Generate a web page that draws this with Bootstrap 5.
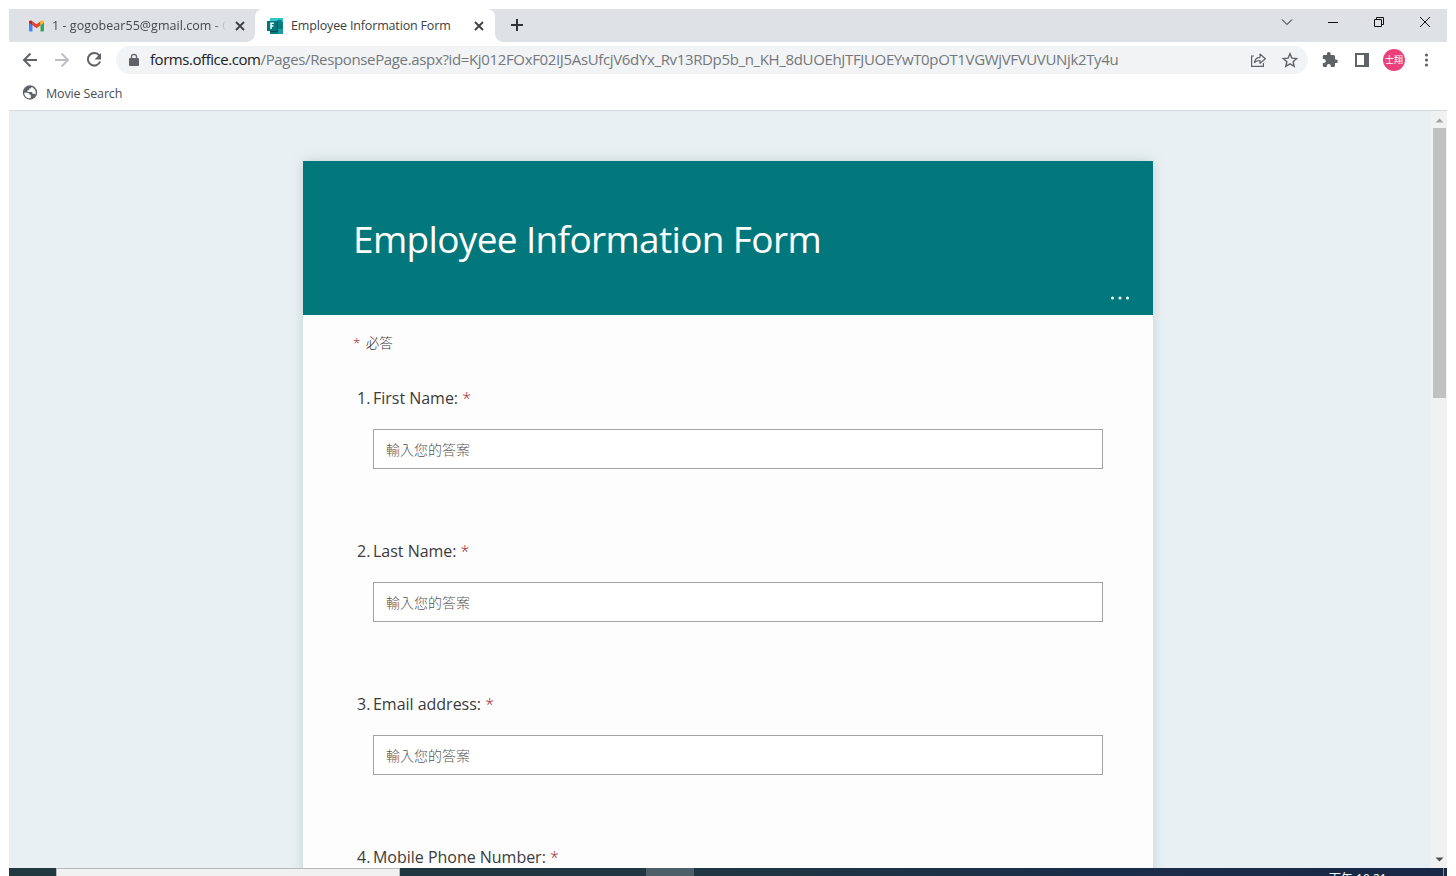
<!DOCTYPE html>
<html lang="zh-Hant">
<head>
<meta charset="utf-8">
<title>Employee Information Form</title>
<link href="https://cdn.jsdelivr.net/npm/bootstrap@5.3.0/dist/css/bootstrap.min.css" rel="stylesheet">
<style>
html,body{height:100%}
body{background:#fff;overflow:hidden;font-family:"Open Sans","Noto Sans CJK TC",sans-serif;color:#333}
svg{display:block;flex:none}
.screen{width:1438px;height:867px;margin:9px 0 0 9px}
.tabstrip{height:33px;background:#dee1e6}
.btab{height:33px;font-size:12.5px;line-height:33px;color:#3c4043;white-space:nowrap}
.tab-mail{width:246px;padding:0 6px 0 20px;color:#45494d}
.tab-form{width:240px;padding:0 11px 0 12px;background:#fff;border-radius:8px 8px 0 0}
.tab-form::before,.tab-form::after{content:"";position:absolute;bottom:0;width:8px;height:8px}
.tab-form::before{left:-8px;background:radial-gradient(circle at 0 0,transparent 7.5px,#fff 8px)}
.tab-form::after{right:-8px;background:radial-gradient(circle at 100% 0,transparent 7.5px,#fff 8px)}
.mail-text{width:174px;overflow:hidden;letter-spacing:.04px;-webkit-mask-image:linear-gradient(90deg,#000 93%,transparent 100%);mask-image:linear-gradient(90deg,#000 93%,transparent 100%)}
.form-title{letter-spacing:-.16px}
.toolbar{height:36px;padding-left:12px}
.omnibox{width:1192px;height:28px;border-radius:14px;background:#f1f3f4;margin-left:13px;padding:0 10px 0 12px}
.url{font-size:15px;line-height:26px;height:28px;letter-spacing:-.35px;color:#74787c;white-space:nowrap;margin-left:10px}
.url span{color:#202124;letter-spacing:-.45px}
.ext{margin-left:14px}
.panel{margin-left:17px}
.avatar{width:22px;height:22px;margin-left:14px;border-radius:50%;background:#ec407a;color:#fff;font-size:9px;line-height:22px}
.bookmarks{height:33px;padding:0 0 3px 13px;border-bottom:1px solid #d5d9dc;font-size:12.5px;letter-spacing:-.15px;color:#4a4e52}
.viewport{height:757px;background:#e8f0f3}
.sheet{width:850px;height:900px;margin:50px 0 0 294px;background:#fdfdfd;box-shadow:0 0 12px rgba(60,90,95,.2)}
.sheet-head{height:154px;background:#03787c;color:#fff;padding:48px 22px 0 50px}
.sheet-head h1{font-size:37px;line-height:60px;font-weight:400;letter-spacing:-.65px;margin:0 0 25px;white-space:nowrap}
.required-note{height:56px;padding:0 50px;font-size:13.5px;line-height:57px;font-weight:300}
.star{color:#a4262c;font-weight:300}
.question{height:153px;padding:12px 50px 0 54px}
.qlabel{font-size:16px;line-height:30px;letter-spacing:-.02px;white-space:nowrap;color:#3b3b3b}
.qnum{width:16px}
.answer{height:40px;margin:16px 0 0 16px;border:1px solid #a3a3a3;background:#fff;padding:0 12px;font-size:14px;font-weight:300;color:#555}
.scroller{width:16px;background:#f1f1f1;padding:7px 1px 6px 2px}
.thumb{width:13px;height:270px;background:#c1c1c1;margin-top:5px}
.taskbar{height:8px;background:linear-gradient(90deg,#213841 0,#203743 50%,#1a2d48 75%,#182846)}
.search-box{width:344px;background:#f1f1f1;border:1px solid #b8b8b8;border-bottom:0;margin-left:47px}
.running{width:48px;background:#4d606a;margin-left:246px}
.clock{margin-left:626px;width:124px;padding:2px 0 0 9px;border-right:1px solid #85909f;color:#fff;font-size:12px;line-height:17px;white-space:nowrap}
</style>
</head>
<body>
<div class="screen d-flex flex-column overflow-hidden">
  <div class="tabstrip d-flex">
    <div class="btab tab-mail d-flex align-items-center">
      <svg width="15" height="12" viewBox="0 0 15 12"><path fill="#4285f4" d="M0 1.500 3.500 4v7.500H1a1 1 0 0 1-1-1z"/><path fill="#34a853" d="M11.500 4 15 1.500v9a1 1 0 0 1-1 1h-2.500z"/><path fill="#ea4335" d="M3.500 1.300 7.500 4.300l4-3v4l-4 3-4-3z"/><path fill="#c5221f" d="M0 2C0 .4 1.800-.2 3.500 1.200v4.100L0 2.700z"/><path fill="#fbbc04" d="M15 2c0-1.600-1.800-2.200-3.500-.8v4.100L15 2.700z"/></svg>
      <div class="mail-text ms-2">1 - gogobear55@gmail.com - G</div>
      <svg class="ms-auto" width="18" height="18" viewBox="0 0 18 18"><path d="m5 5 8 8m0-8-8 8" stroke="#3c4043" stroke-width="1.800"/></svg>
    </div>
    <div class="btab tab-form d-flex align-items-center position-relative">
      <svg width="16" height="16" viewBox="0 0 16 16"><path fill="#1bb1b5" d="M3 0h13v16H3z"/><path fill="#37c6d0" d="M3 0h13v5H3z"/><path fill="#087b80" d="M9 4h7v7H9zM3 11h11v5H3z"/><circle cx="12.500" cy="4" r="2.500" fill="#038387"/><path fill="#1a9ba1" d="M11 11h5v5h-5z"/><path fill="#004f52" d="M3 3h8v11H3z"/><path fill="#03787c" d="M0 3h10v10H0z"/><path fill="none" stroke="#fff" stroke-width="1.500" d="M6.800 5.300H4V11M4 8.100h2.500"/></svg>
      <div class="form-title ms-2">Employee Information Form</div>
      <svg class="ms-auto" width="10" height="10" viewBox="0 0 10 10"><path d="m1 1 8 8m0-8-8 8" stroke="#3c4043" stroke-width="1.800"/></svg>
    </div>
    <svg class="ms-3 mt-2" width="12" height="16" viewBox="0 0 12 16"><path d="M6 2v12M0 8h12" stroke="#303438" stroke-width="2"/></svg>
    <svg class="ms-auto" width="166" height="28" viewBox="0 0 166 28" fill="none" stroke="#111"><path d="m1 10.500 5 5 5-5M47 13.500h10"/><path d="M93.500 10.500h7v7h-7zM95.500 10.500v-2h7v7h-2M139 8l10 10m0-10-10 10"/></svg>
  </div>

  <div class="toolbar d-flex align-items-center">
    <svg width="82" height="20" viewBox="0 0 82 20" fill="none"><path d="M16 10H3m6.500-6.500L3 10l6.500 6.500" stroke="#5f6368" stroke-width="2"/><path d="M34 10h13m-6.500-6.500L47 10l-6.500 6.500" stroke="#bbbdc0" stroke-width="1.800"/><path d="M78.300 5.600A6.300 6.300 0 1 0 79.100 11.500" stroke="#5f6368" stroke-width="2"/><path fill="#5f6368" d="M80 3v6.500h-6.500z"/></svg>
    <div class="omnibox d-flex align-items-center">
      <svg width="12" height="14" viewBox="0 0 12 14"><path fill="#5f6368" d="M2 5h8a1 1 0 0 1 1 1v6a1 1 0 0 1-1 1H2a1 1 0 0 1-1-1V6a1 1 0 0 1 1-1z"/><path d="M3.500 5.500V3.800a2.500 2.500 0 0 1 5 0v1.700" fill="none" stroke="#5f6368" stroke-width="1.300"/></svg>
      <div class="url"><span>forms.office.com</span>/Pages/ResponsePage.aspx?id=Kj012FOxF02IJ5AsUfcjV6dYx_Rv13RDp5b_n_KH_8dUOEhJTFJUOEYwT0pOT1VGWjVFVUVUNjk2Ty4u</div>
      <svg class="ms-auto" width="48" height="18" viewBox="0 0 48 18" fill="none" stroke="#5f6368" stroke-width="1.200"><path d="M4 5H1.600v10.400h11.800V12"/><path d="M4.500 11.500c.5-3.500 2.500-5.200 5.500-5.200V3l5.400 4.800-5.400 4.500V9.500c-2.500 0-4 .5-5.500 2z" stroke-linejoin="round"/><path d="m40 2.700 1.900 4.400 4.800.4-3.600 3.200 1.100 4.700-4.200-2.500-4.200 2.500 1.100-4.700-3.600-3.200 4.800-.4z" stroke-width="1.400"/></svg>
    </div>
    <svg class="ext" width="16" height="16" viewBox="0 0 16 16"><path fill="#5f6368" d="M14 7.400h-1V4.500A1.500 1.500 0 0 0 11.500 3H8.700V2a1.900 1.900 0 0 0-3.800 0v1H2a1.200 1.200 0 0 0-1.200 1.200V7h1a2 2 0 0 1 0 4h-1v2.800A1.300 1.300 0 0 0 2 15h2.800v-1a2 2 0 0 1 4 0v1h2.700a1.500 1.500 0 0 0 1.500-1.500v-2.400h1a1.850 1.850 0 0 0 0-3.700z"/></svg>
    <svg class="panel" width="14" height="14" viewBox="0 0 14 14"><path d="M1 1h12v12H1z" fill="#fff" stroke="#5f6368" stroke-width="2"/><path fill="#5f6368" d="M9 1h4v12H9z"/></svg>
    <div class="avatar text-center">士翔</div>
    <svg class="ms-auto me-3" width="9" height="16" viewBox="0 0 9 16" fill="#5f6368"><circle cx="4.500" cy="3" r="1.600"/><circle cx="4.500" cy="8" r="1.600"/><circle cx="4.500" cy="13" r="1.600"/></svg>
  </div>

  <div class="bookmarks d-flex align-items-center">
    <svg width="16" height="16" viewBox="0 0 16 16"><circle cx="8" cy="7.500" r="7.200" fill="#5f6368"/><path fill="#fff" d="M2.200 7.800h3.300c1.300 0 2 .8 2 2h1.300v3.500c-3.600.5-6.500-2-6.600-5.500zM9.500 1.900c-.2 1.300-.8 1.700-2.300 1.700v1.700H5.500V7h3.600c1 0 1.400.6 1.400 1.700h1.800c.5 0 .9.300 1.200.8 1-2.900-.6-6.400-4-7.600z"/></svg>
    <span class="ms-2 mt-1">Movie Search</span>
  </div>

  <main class="viewport d-flex overflow-hidden">
    <section class="sheet flex-shrink-0">
      <header class="sheet-head">
        <h1>Employee Information Form</h1>
        <svg class="ms-auto" width="20" height="8" viewBox="0 0 20 8" fill="#fff"><circle cx="1.500" cy="4" r="1.500"/><circle cx="9" cy="4" r="1.500"/><circle cx="16.500" cy="4" r="1.500"/></svg>
      </header>
      <div class="required-note"><span class="star me-1">*</span>&#8202;必答</div>
      <div class="question"><div class="qlabel d-flex"><span class="qnum">1.</span><span>First Name: <span class="star">*</span></span></div><div class="answer d-flex align-items-center">輸入您的答案</div></div>
      <div class="question"><div class="qlabel d-flex"><span class="qnum">2.</span><span>Last Name: <span class="star">*</span></span></div><div class="answer d-flex align-items-center">輸入您的答案</div></div>
      <div class="question"><div class="qlabel d-flex"><span class="qnum">3.</span><span>Email address: <span class="star">*</span></span></div><div class="answer d-flex align-items-center">輸入您的答案</div></div>
      <div class="question"><div class="qlabel d-flex"><span class="qnum">4.</span><span>Mobile Phone Number: <span class="star">*</span></span></div></div>
    </section>
    <div class="scroller d-flex flex-column ms-auto">
      <svg width="13" height="5" viewBox="0 0 13 5"><path fill="#a3a3a3" d="m2.500 4.500 4-4 4 4z"/></svg>
      <div class="thumb"></div>
      <svg class="mt-auto" width="13" height="5" viewBox="0 0 13 5"><path fill="#505050" d="m2.500.5 4 4 4-4z"/></svg>
    </div>
  </main>

  <footer class="taskbar d-flex overflow-hidden">
    <div class="search-box"></div>
    <div class="running"></div>
    <div class="clock">下午 10:21</div>
  </footer>
</div>
<script src="https://cdn.jsdelivr.net/npm/bootstrap@5.3.0/dist/js/bootstrap.bundle.min.js"></script>
</body>
</html>
